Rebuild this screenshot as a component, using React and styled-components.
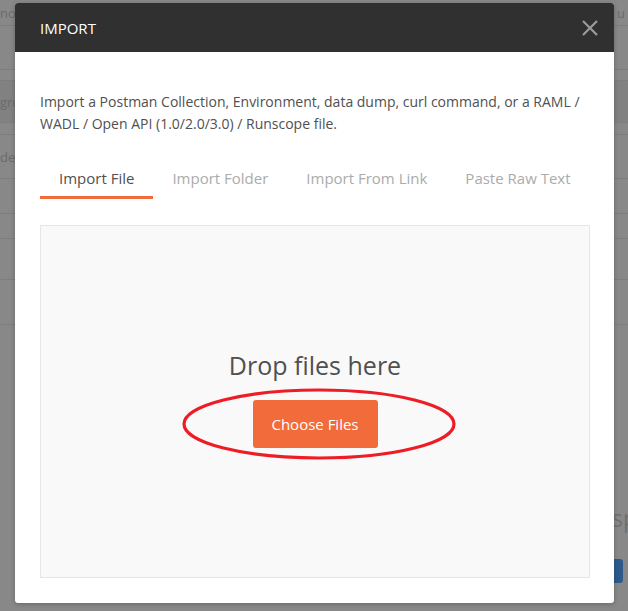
import React from 'react'
import styled, { createGlobalStyle } from 'styled-components'

const GlobalStyle = createGlobalStyle`
    html, body {
        margin: 0;
        padding: 0;
        background: #888888;
        overflow: hidden;
    }
    body {
        font-family: "Open Sans", "Noto Sans", Arial, sans-serif;
    }
    * { box-sizing: border-box; }
`;

const rows = [
    { h: 26, left: 'no', right: 'u' },
    { h: 44 },
    { h: 11 },
    { h: 42, left: 'gro', band: true },
    { h: 12 },
    { h: 44, left: 'der' },
    { h: 35 },
    { h: 25 },
    { h: 41 },
    { h: 45 },
]

const tabs = ['Import File', 'Import Folder', 'Import From Link', 'Paste Raw Text']

const App = () => {
    return (
        <Page>
            <GlobalStyle />
            <Backdrop>
                {rows.map((row, i) => (
                    <BgRow key={i} $h={row.h} $band={row.band}>
                        <BgText>{row.left}</BgText>
                        <BgText>{row.right}</BgText>
                    </BgRow>
                ))}
                <ResponseRow>
                    <ResponseTitle>Response</ResponseTitle>
                </ResponseRow>
                <SendRow>
                    <SendButton />
                </SendRow>
            </Backdrop>

            <Modal>
                <Header>
                    <Title>Import</Title>
                    <Close aria-label="close">
                        <svg width="16" height="16" viewBox="0 0 16 16">
                            <path d="M1 1 L15 15 M15 1 L1 15" stroke="#9b9b9b" strokeWidth="2.2" fill="none" />
                        </svg>
                    </Close>
                </Header>
                <Body>
                    <Description>
                        Import a Postman Collection, Environment, data dump, curl command, or a RAML / WADL / Open API (1.0/2.0/3.0) / Runscope file.
                    </Description>
                    <Tabs>
                        {tabs.map((t, i) => (
                            <Tab key={t} $active={i === 0}>{t}</Tab>
                        ))}
                    </Tabs>
                    <DropZone>
                        <DropText>Drop files here</DropText>
                        <ChooseButton>Choose Files</ChooseButton>
                    </DropZone>
                </Body>
            </Modal>

            <Annotation width="280" height="80" viewBox="0 0 280 80">
                <ellipse cx="139" cy="39" rx="135" ry="34" fill="none" stroke="#ee1c25" strokeWidth="3.2" />
            </Annotation>
        </Page>
    )
}

export default App

const Page = styled.div`
    position: relative;
    width: 628px;
    height: 611px;
    overflow: hidden;
    background: #888888;
`;
const Backdrop = styled.div`
    display: flex;
    flex-direction: column;
    height: 100%;
`;
const BgRow = styled.div`
    height: ${p => p.$h}px;
    display: flex;
    justify-content: space-between;
    align-items: center;
    border-bottom: 1px solid #7d7d7d;
    background: ${p => (p.$band ? '#818181' : 'transparent')};
`;
const BgText = styled.span`
    font-size: 13px;
    color: #6b6b6b;
    padding: 0 3px 0 0;
`;
const ResponseRow = styled.div`
    margin-top: 176px;
    height: 34px;
    display: flex;
    align-items: center;
    padding-left: 585px;
`;
const ResponseTitle = styled.span`
    font-size: 23px;
    color: #707070;
    white-space: nowrap;
`;
const SendRow = styled.div`
    margin-top: 24px;
    display: flex;
    justify-content: flex-end;
    padding-right: 5px;
`;
const SendButton = styled.div`
    width: 60px;
    height: 24px;
    border-radius: 3px;
    background: #2d5a8a;
`;

const Modal = styled.div`
    position: absolute;
    top: 3px;
    left: 15px;
    width: 599px;
    height: 600px;
    background: #ffffff;
    border-radius: 3px;
    overflow: hidden;
    box-shadow: 0 1px 4px rgba(0, 0, 0, 0.25);
    display: flex;
    flex-direction: column;
`;
const Header = styled.div`
    height: 49px;
    flex-shrink: 0;
    background: #303030;
    display: flex;
    align-items: center;
    justify-content: space-between;
    padding: 0 16px 0 25px;
`;
const Title = styled.h1`
    margin: 0;
    font-size: 15px;
    font-weight: 400;
    color: #ffffff;
    text-transform: uppercase;
`;
const Close = styled.div`
    width: 16px;
    height: 16px;
    display: flex;
    cursor: pointer;
`;
const Body = styled.div`
    flex: 1;
    display: flex;
    flex-direction: column;
    padding: 39px 24px 25px 25px;
`;
const Description = styled.p`
    margin: 0;
    font-size: 14px;
    line-height: 22px;
    color: #505050;
`;
const Tabs = styled.div`
    display: flex;
    margin-top: 33px;
`;
const Tab = styled.div`
    padding: 0 19px 8px;
    font-size: 15px;
    line-height: 20px;
    color: ${p => (p.$active ? '#505050' : '#ababab')};
    border-bottom: 3px solid ${p => (p.$active ? '#f26b3a' : 'transparent')};
    cursor: pointer;
`;
const DropZone = styled.div`
    margin-top: 26px;
    flex: 1;
    background: #f9f9f9;
    border: 1px solid #e6e6e6;
    display: flex;
    flex-direction: column;
    align-items: center;
    padding-top: 123px;
`;
const DropText = styled.div`
    font-size: 25px;
    line-height: 32px;
    color: #505050;
`;
const ChooseButton = styled.button`
    margin-top: 19px;
    width: 125px;
    height: 48px;
    border: none;
    border-radius: 3px;
    background: #f26b3a;
    color: #ffffff;
    font-family: inherit;
    font-size: 15px;
    cursor: pointer;
`;
const Annotation = styled.svg`
    position: absolute;
    left: 180px;
    top: 385px;
`;
